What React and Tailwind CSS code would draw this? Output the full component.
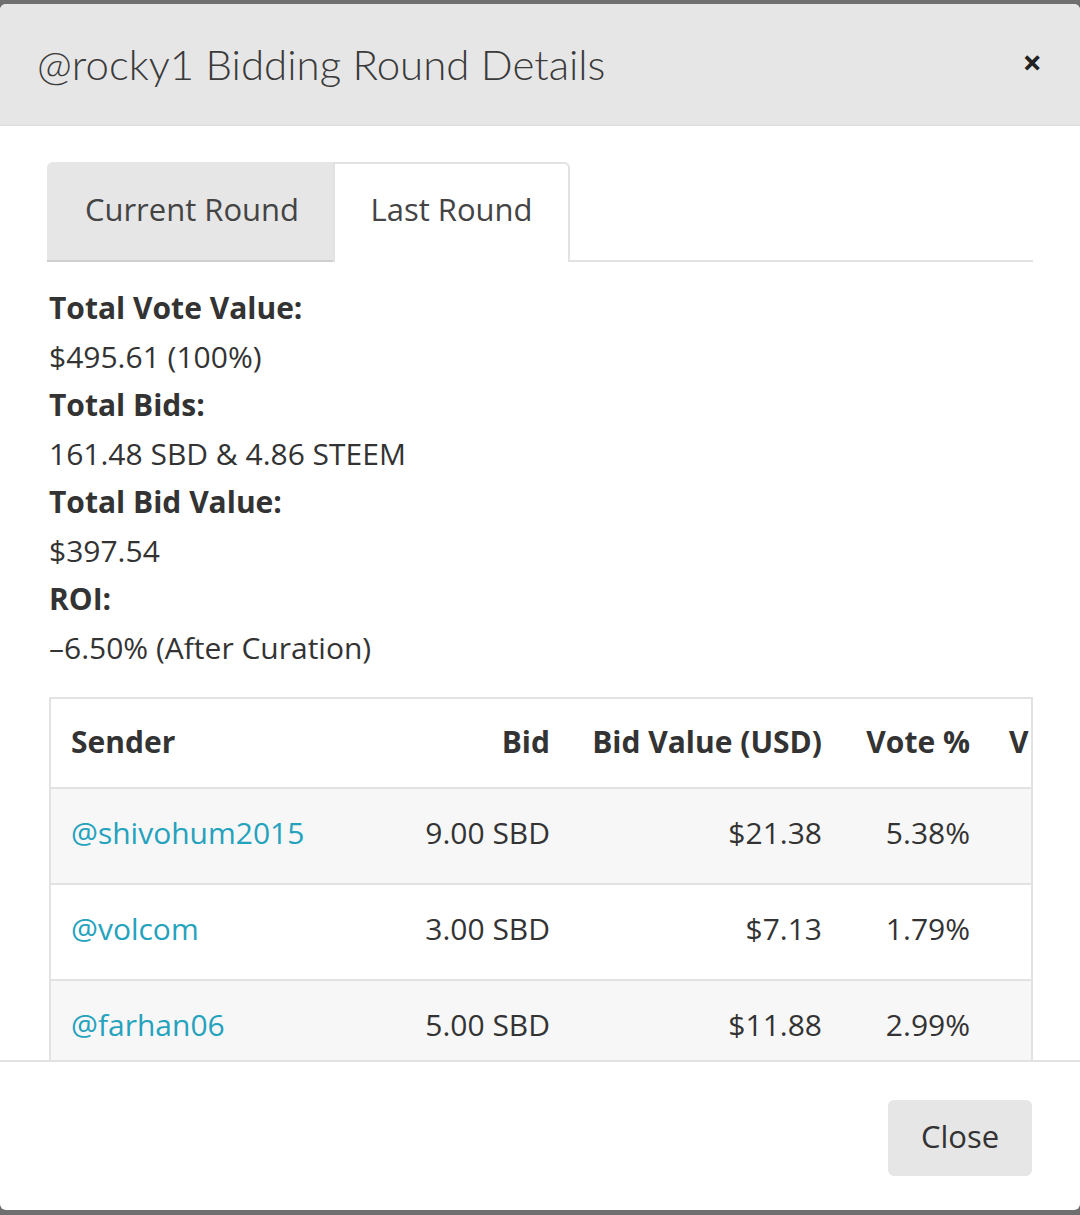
import React from "react";

const rows = [
  { sender: "@shivohum2015", bid: "9.00 SBD", value: "$21.38", vote: "5.38%", striped: true },
  { sender: "@volcom", bid: "3.00 SBD", value: "$7.13", vote: "1.79%", striped: false },
  { sender: "@farhan06", bid: "5.00 SBD", value: "$11.88", vote: "2.99%", striped: true },
];

export default function App() {
  return (
    <div
      className="w-[1080px] h-[1215px] bg-[#6f6f6f] pt-[4px] overflow-hidden text-[#333]"
      style={{ fontFamily: '"Open Sans", "Noto Sans", sans-serif' }}
    >
      <div className="h-[1206px] bg-white rounded-[6px] overflow-hidden flex flex-col">
        {/* Header */}
        <div className="h-[122px] shrink-0 bg-[#e6e6e6] border-b border-[#dcdcdc] flex items-center justify-between pl-[37px] pr-[38px]">
          <h1
            className="text-[42px] font-light leading-none text-[#3a3a3a] pb-[2px]"
            style={{ fontFamily: 'Lato, "Open Sans", sans-serif' }}
          >
            @rocky1 Bidding Round Details
          </h1>
          <button className="text-[34px] font-bold leading-none text-[#222] pb-[6px]">×</button>
        </div>

        {/* Body */}
        <div className="flex-1 overflow-hidden px-[47px] pt-[36px]">
          {/* Tabs */}
          <div className="flex border-b-2 border-[#e2e2e2] h-[100px]">
            <div className="w-[286px] h-[100px] bg-[#e6e6e6] rounded-tl-[6px] border-b-2 border-[#cfcfcf] flex items-center justify-center text-[31px] pl-[4px] pb-[4px] text-[#444]">
              Current Round
            </div>
            <div className="w-[237px] h-[100px] bg-white rounded-tr-[6px] border-2 border-b-0 border-[#e2e2e2] -mb-[2px] flex items-center justify-center text-[31px] pb-[8px] text-[#444]">
              Last Round
            </div>
          </div>

          {/* Info */}
          <div className="pl-[2px] pt-[22px] text-[30px] leading-[48.5px]">
            <div className="font-bold">Total Vote Value:</div>
            <div>$495.61 (100%)</div>
            <div className="font-bold">Total Bids:</div>
            <div>161.48 SBD &amp; 4.86 STEEM</div>
            <div className="font-bold">Total Bid Value:</div>
            <div>$397.54</div>
            <div className="font-bold">ROI:</div>
            <div>–6.50% (After Curation)</div>
          </div>

          {/* Table */}
          <div className="mt-[25px] ml-[2px] border-2 border-[#e2e2e2] overflow-hidden">
            <table className="table-fixed border-collapse w-[1200px] text-[30px]">
              <colgroup>
                <col className="w-[309px]" />
                <col className="w-[210px]" />
                <col className="w-[272px]" />
                <col className="w-[148px]" />
                <col className="w-[261px]" />
              </colgroup>
              <thead>
                <tr className="h-[89px]">
                  <th className="text-left font-bold px-[20px] pb-[4px]">Sender</th>
                  <th className="text-right font-bold px-[20px] pb-[4px]">Bid</th>
                  <th className="text-right font-bold px-[20px] pb-[4px]">Bid Value (USD)</th>
                  <th className="text-right font-bold px-[20px] pb-[4px]">Vote %</th>
                  <th className="text-left font-bold px-[19px] pb-[4px] whitespace-nowrap">V</th>
                </tr>
              </thead>
              <tbody>
                {rows.map((r) => (
                  <tr
                    key={r.sender}
                    className={`h-[96px] border-t-2 border-[#e2e2e2] ${r.striped ? "bg-[#f7f7f7]" : "bg-white"}`}
                  >
                    <td className="px-[20px] pb-[8px] text-left text-[#25a2bd]">{r.sender}</td>
                    <td className="px-[20px] pb-[8px] text-right">{r.bid}</td>
                    <td className="px-[20px] pb-[8px] text-right">{r.value}</td>
                    <td className="px-[20px] pb-[8px] text-right">{r.vote}</td>
                    <td className="px-[19px]"></td>
                  </tr>
                ))}
              </tbody>
            </table>
          </div>
        </div>

        {/* Footer */}
        <div className="h-[150px] shrink-0 border-t-2 border-[#e2e2e2] flex items-center justify-end pr-[48px] pt-[4px]">
          <button className="w-[144px] h-[76px] bg-[#e6e6e6] rounded-[6px] text-[31px] text-[#333] pb-[4px]">
            Close
          </button>
        </div>
      </div>
    </div>
  );
}
